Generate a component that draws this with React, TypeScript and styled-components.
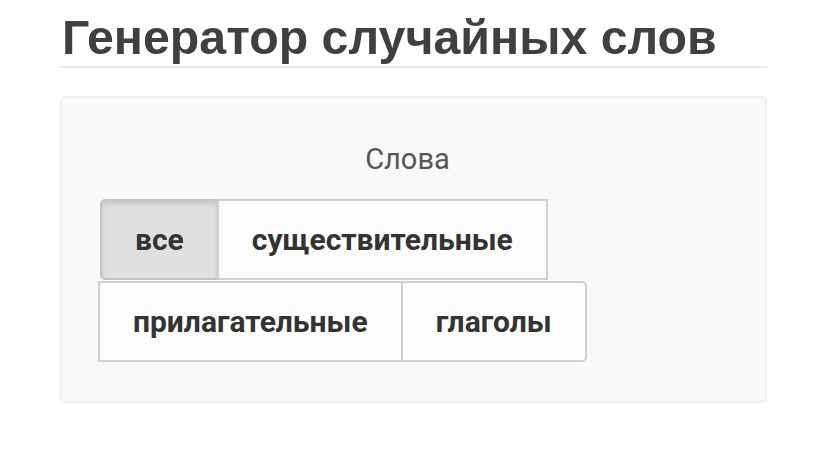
import styled, { createGlobalStyle, css } from 'styled-components';

const GlobalStyle = createGlobalStyle`
  html, body {
    margin: 0;
    padding: 0;
    background: #ffffff;
  }
  * {
    box-sizing: border-box;
  }
`;

const Page = styled.div`
  width: 828px;
  padding: 0 61px 0 60px;
`;

const Title = styled.h1`
  margin: 0;
  padding: 11px 0 3px 2px;
  font-family: 'Liberation Sans', Arial, sans-serif;
  font-weight: 700;
  font-size: 48.3px;
  line-height: 52px;
  color: #404040;
  border-bottom: 2px solid #e8e8e8;
`;

const Panel = styled.div`
  margin-top: 28px;
  height: 307px;
  padding: 44px 40px 0 38px;
  background: #f9f9f9;
  border: 2px solid #efefef;
  border-radius: 5px;
`;

const Legend = styled.div`
  text-align: center;
  font-family: Roboto, 'Noto Sans', sans-serif;
  font-size: 29px;
  line-height: 34px;
  color: #555;
  margin-bottom: 23px;
  padding-right: 10px;
`;

// one button group that wraps onto a second line
const Group = styled.div`
  display: flex;
  flex-wrap: wrap;
  row-gap: 1px;
  width: 520px;
`;

const Option = styled.button<{ $active?: boolean; $first?: boolean; $last?: boolean }>`
  height: 81px;
  padding: 0 33px;
  font-family: Roboto, 'Noto Sans', sans-serif;
  font-weight: 700;
  font-size: 30px;
  color: #333;
  background: #fcfcfc;
  border: 2px solid #d0d0d0;
  border-radius: 0;
  margin-left: -2px;
  ${(p) =>
    p.$first &&
    css`
      margin-left: 0;
      border-top-left-radius: 5px;
      border-bottom-left-radius: 5px;
    `}
  ${(p) =>
    p.$last &&
    css`
      border-top-right-radius: 5px;
      border-bottom-right-radius: 5px;
    `}
  ${(p) =>
    p.$active &&
    css`
      background: #e0e0e0;
      border-color: #c4c4c4;
      box-shadow: inset 0 3px 5px rgba(0, 0, 0, 0.12);
    `}
`;

const options = ['все', 'существительные', 'прилагательные', 'глаголы'];

export default function App() {
  return (
    <Page>
      <GlobalStyle />
      <Title>Генератор случайных слов</Title>
      <Panel>
        <Legend>Слова</Legend>
        <Group>
          {options.map((label, i) => (
            <Option
              key={label}
              $active={i === 0}
              $first={i === 0}
              $last={i === options.length - 1}
            >
              {label}
            </Option>
          ))}
        </Group>
      </Panel>
    </Page>
  );
}
